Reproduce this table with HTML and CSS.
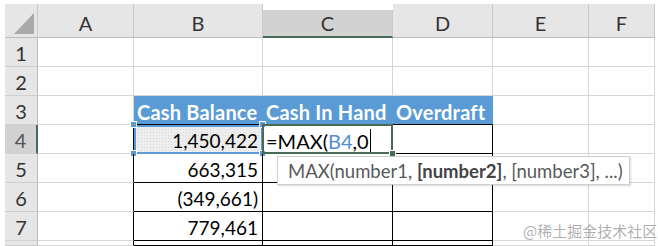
FILE: index.html
```html
<!DOCTYPE html>
<html>
<head>
<meta charset="utf-8">
<link rel="stylesheet" href="styles.css">
</head>
<body>
<div class="sheet">
  <div class="hd corner"><span class="tri"></span></div>
  <div class="hd col">A</div>
  <div class="hd col">B</div>
  <div class="hd col active-col">C</div>
  <div class="hd col">D</div>
  <div class="hd col">E</div>
  <div class="hd col">F</div>

  <div class="hd row">1</div>
  <div class="c"></div><div class="c"></div><div class="c"></div><div class="c"></div><div class="c"></div><div class="c"></div>

  <div class="hd row">2</div>
  <div class="c"></div><div class="c"></div><div class="c"></div><div class="c"></div><div class="c"></div><div class="c"></div>

  <div class="hd row">3</div>
  <div class="c"></div>
  <div class="c th">Cash Balance</div>
  <div class="c th">Cash In Hand</div>
  <div class="c th last">Overdraft</div>
  <div class="c"></div><div class="c"></div>

  <div class="hd row active-row">4</div>
  <div class="c edge"></div>
  <div class="c tb num ref">1,450,422<span class="h tl"></span><span class="h tr"></span><span class="h bl"></span><span class="h br"></span></div>
  <div class="c tb edit"><span class="formula">=MAX(<span class="refx">B4</span>,0</span><span class="caret"></span><span class="fill"></span></div>
  <div class="c tb"></div>
  <div class="c"></div><div class="c"></div>

  <div class="hd row">5</div>
  <div class="c edge"></div>
  <div class="c tb num">663,315</div>
  <div class="c tb tipcell"><div class="tip"><span>MAX(number1, <b>[number2]</b>, [number3], ...)</span></div></div>
  <div class="c tb"></div>
  <div class="c"></div><div class="c"></div>

  <div class="hd row">6</div>
  <div class="c edge"></div>
  <div class="c tb num">(349,661)</div>
  <div class="c tb"></div>
  <div class="c tb"></div>
  <div class="c"></div><div class="c"></div>

  <div class="hd row">7</div>
  <div class="c edge"></div>
  <div class="c tb num">779,461</div>
  <div class="c tb"></div>
  <div class="c tb"></div>
  <div class="c"></div><div class="c"></div>

  <div class="hd row"></div>
  <div class="c edge"></div>
  <div class="c tb"></div>
  <div class="c tb"></div>
  <div class="c tb"></div>
  <div class="c"></div><div class="c"></div>
</div>
<div class="watermark">@稀土掘金技术社区</div>
</body>
</html>
```
FILE: styles.css
```css
html, body {
  margin: 0;
  padding: 0;
  background: #fff;
}
body {
  padding: 4px 0 0 5px;
  font-family: Lato, "Open Sans", "Liberation Sans", sans-serif;
  font-size: 19px;
  color: #000;
  position: relative;
  width: 658px;
  height: 246px;
  box-sizing: border-box;
  overflow: hidden;
}
.sheet {
  display: grid;
  grid-template-columns: 33px 96px 129px 130px 100px 96px 66px;
  grid-template-rows: 34px repeat(7, 29px) 5px;
}
.hd {
  background: #e6e6e6;
  color: #333;
  box-sizing: border-box;
  display: flex;
  align-items: center;
  justify-content: center;
  font-size: 20px;
}
.col {
  border-right: 1px solid #c9c9c9;
  border-bottom: 1px solid #bdbdbd;
  padding-top: 4px;
}
.corner {
  border-right: 1px solid #c9c9c9;
  border-bottom: 1px solid #bdbdbd;
  position: relative;
}
.tri {
  position: absolute;
  right: 3px;
  bottom: 3px;
  width: 0;
  height: 0;
  border-left: 20px solid transparent;
  border-bottom: 21px solid #a9a9a9;
}
.active-col {
  background: #d2d2d2;
  border-bottom: 2px solid #4a6a58;
  margin-top: 6px;
  padding-top: 0;
}
.row {
  border-bottom: 1px solid #cfcfcf;
  border-right: 1px solid #bdbdbd;
  padding-top: 2px;
}
.active-row {
  background: #d2d2d2;
  border-right: 2px solid #4a6a58;
  color: #555;
}
.c {
  box-sizing: border-box;
  border-right: 1px solid #d6d6d6;
  border-bottom: 1px solid #d6d6d6;
  white-space: nowrap;
  display: flex;
  align-items: center;
  padding: 3px 4px 0;
  position: relative;
}
.edge {
  border-right-color: #000;
}
.th {
  background: #5b9bd5;
  color: #fff;
  font-weight: 700;
  font-size: 20px;
  border-right-color: #5b9bd5;
  border-bottom-color: #000;
  padding-left: 3px;
  letter-spacing: 0.2px;
}
.tb {
  border-right-color: #000;
  border-bottom-color: #000;
}
.num {
  justify-content: flex-end;
  padding-right: 4px;
}
.ref {
  background-color: #eeeeee;
  background-image: radial-gradient(#d9d9d9 0.6px, transparent 0.8px);
  background-size: 3px 3px;
  outline: 2px solid #5b9bd5;
  outline-offset: -2px;
}
.h {
  position: absolute;
  width: 5px;
  height: 5px;
  background: #5b9bd5;
  border: 1px solid #fff;
}
.h.tl { left: -4px; top: -4px; }
.h.tr { right: -4px; top: -4px; }
.h.bl { left: -4px; bottom: -4px; }
.h.br { right: -4px; bottom: -4px; }
.edit {
  padding-left: 3px;
}
.formula {
  font-size: 20px;
}
.edit::after {
  content: "";
  position: absolute;
  left: -1px;
  top: -1px;
  right: -1px;
  bottom: -1px;
  border: 2px solid #4a6a58;
  pointer-events: none;
}
.refx {
  color: #4f8fd0;
}
.caret {
  display: inline-block;
  width: 1px;
  height: 24px;
  background: #000;
  margin-left: 1px;
}
.fill {
  position: absolute;
  right: -4px;
  bottom: -4px;
  width: 5px;
  height: 5px;
  background: #4a6a58;
  border: 1px solid #fff;
  z-index: 2;
}
.tip {
  position: absolute;
  left: 14px;
  top: 2px;
  width: 353px;
  height: 29px;
  box-sizing: border-box;
  background: #fff;
  border: 1px solid #cfcfcf;
  box-shadow: 1px 1px 2px rgba(0,0,0,0.15);
  color: #595959;
  font-size: 18.5px;
  display: flex;
  align-items: center;
  padding: 1px 0 0 10px;
  z-index: 3;
  white-space: nowrap;
}
.tip b {
  color: #444;
  font-weight: 700;
}
.watermark {
  position: absolute;
  left: 523px;
  top: 220px;
  font-family: "Noto Sans CJK SC", sans-serif;
  font-size: 15px;
  color: rgba(140, 140, 140, 0.7);
  white-space: nowrap;
}
```
